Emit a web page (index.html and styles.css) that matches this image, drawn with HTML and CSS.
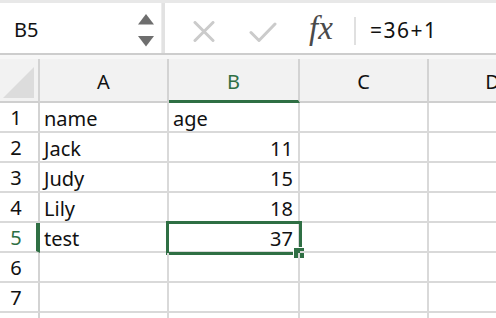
FILE: index.html
```html
<!DOCTYPE html>
<html>
<head>
<meta charset="utf-8">
<link rel="stylesheet" href="styles.css">
</head>
<body>
<div class="app">
  <div class="toolbar">
    <div class="namebox">
      <span class="name">B5</span>
      <div class="spin">
        <svg width="16" height="11" viewBox="0 0 16 11"><polygon points="8,0 16,10.5 0,10.5" fill="#6e6e6e"/></svg>
        <svg width="16" height="11" viewBox="0 0 16 11"><polygon points="0,0 16,0 8,10.5" fill="#6e6e6e"/></svg>
      </div>
    </div>
    <div class="vsep"></div>
    <div class="actions">
      <svg class="ico-x" width="22" height="21" viewBox="0 0 22 21"><path d="M2 1.5 L20 19.5 M20 1.5 L2 19.5" stroke="#cbcbcb" stroke-width="3" stroke-linecap="round"/></svg>
      <svg class="ico-ok" width="28" height="21" viewBox="0 0 28 21"><path d="M2 10.5 L10 18.5 L26 2" stroke="#cbcbcb" stroke-width="3" fill="none" stroke-linecap="round" stroke-linejoin="round"/></svg>
      <span class="fx">fx</span>
      <div class="fsep"></div>
    </div>
    <div class="formula">=36+1</div>
  </div>
  <div class="gap"></div>
  <div class="sheet">
    <div class="hdr corner"><svg width="31" height="31" viewBox="0 0 31 31"><polygon points="31,0 31,31 0,31" fill="#dcdcdc"/></svg></div>
    <div class="hdr col">A</div>
    <div class="hdr col sel">B</div>
    <div class="hdr col">C</div>
    <div class="hdr col last">D</div>

    <div class="rh">1</div><div class="c">name</div><div class="c">age</div><div class="c"></div><div class="c last"></div>
    <div class="rh">2</div><div class="c">Jack</div><div class="c num">11</div><div class="c"></div><div class="c last"></div>
    <div class="rh">3</div><div class="c">Judy</div><div class="c num">15</div><div class="c"></div><div class="c last"></div>
    <div class="rh">4</div><div class="c">Lily</div><div class="c num">18</div><div class="c"></div><div class="c last"></div>
    <div class="rh rsel">5</div><div class="c">test</div><div class="c num active">37<span class="selbox"></span><span class="handle"></span></div><div class="c"></div><div class="c last"></div>
    <div class="rh">6</div><div class="c"></div><div class="c"></div><div class="c"></div><div class="c last"></div>
    <div class="rh">7</div><div class="c"></div><div class="c"></div><div class="c"></div><div class="c last"></div>
    <div class="rh"></div><div class="c"></div><div class="c"></div><div class="c"></div><div class="c last"></div>
  </div>
</div>
</body>
</html>
```

FILE: styles.css
```css
* { box-sizing: border-box; }
html, body {
  margin: 0;
  padding: 0;
  width: 496px;
  height: 318px;
  overflow: hidden;
  background: #ffffff;
  font-family: "Noto Sans", "Open Sans", sans-serif;
  color: #111;
}
.app {
  width: 496px;
  height: 318px;
  overflow: hidden;
}
.toolbar {
  display: flex;
  align-items: stretch;
  height: 55px;
  border-top: 3px solid #e8e8e8;
  border-bottom: 2px solid #cdcdcd;
  background: #fff;
}
.namebox {
  width: 162px;
  display: flex;
  align-items: center;
  padding-left: 14px;
  padding-right: 7px;
  border-right: 1px solid #ececec;
}
.name {
  font-size: 20px;
  flex: 1;
  padding-top: 3px;
}
.spin {
  display: flex;
  flex-direction: column;
  gap: 11px;
  margin-top: 4px;
}
.spin svg { display: block; }
.vsep {
  width: 3px;
  background: #e2e2e2;
}
.actions {
  display: flex;
  align-items: center;
  padding-left: 28px;
  width: 191px;
}
.ico-x { margin-top: 7px; }
.ico-ok { margin-left: 34px; margin-top: 8px; }
.fx {
  font-family: "Liberation Serif", "DejaVu Serif", serif;
  font-style: italic;
  font-size: 33px;
  color: #4a4a4a;
  margin-left: 32px;
  margin-top: 0;
}
.fsep {
  width: 2px;
  height: 28px;
  background: #e0e0e0;
  margin-left: auto;
  margin-top: 6px;
}
.formula {
  font-size: 21px;
  padding-left: 14px;
  padding-top: 13px;
  letter-spacing: 1.5px;
}
.gap {
  height: 4px;
  background: #f7f7f7;
}
.sheet {
  display: grid;
  width: 558px;
  grid-template-columns: 40px 129px 131px 129px 129px;
  grid-template-rows: 44px repeat(8, 30px);
}
.hdr {
  background: #f2f2f2;
  border-right: 2px solid #d3d3d3;
  border-bottom: 2px solid #cfcfcf;
  font-size: 20px;
  display: flex;
  align-items: center;
  justify-content: center;
  padding-top: 2px;
  color: #111;
}
.hdr.corner {
  align-items: flex-end;
  justify-content: flex-end;
  padding: 0 4px 3px 0;
}
.hdr.corner svg { display: block; }
.hdr.sel {
  color: #2f6f44;
  border-bottom: 3px solid #2f6f44;
  padding-top: 3px;
}
.rh {
  background: #fff;
  border-right: 2px solid #d3d3d3;
  border-bottom: 2px solid #d9d9d9;
  font-size: 20px;
  text-align: center;
  padding-right: 6px;
  padding-top: 2px;
  line-height: 26px;
}
.rh.rsel {
  color: #2f6f44;
  border-right: 4px solid #2f6f44;
  padding-right: 4px;
}
.c {
  position: relative;
  border-right: 2px solid #d9d9d9;
  border-bottom: 2px solid #d9d9d9;
  font-size: 20px;
  padding: 3px 5px 0 4px;
  line-height: 25px;
  white-space: nowrap;
}
.c.num { text-align: right; }
.selbox {
  position: absolute;
  left: -3px;
  top: -2px;
  width: 136px;
  height: 34px;
  border: 3px solid #2f6f44;
  pointer-events: none;
}
.handle {
  position: absolute;
  left: 124px;
  top: 24px;
  width: 12px;
  height: 12px;
  background: #2f6f44;
  border: 1px solid #fff;
}
```
